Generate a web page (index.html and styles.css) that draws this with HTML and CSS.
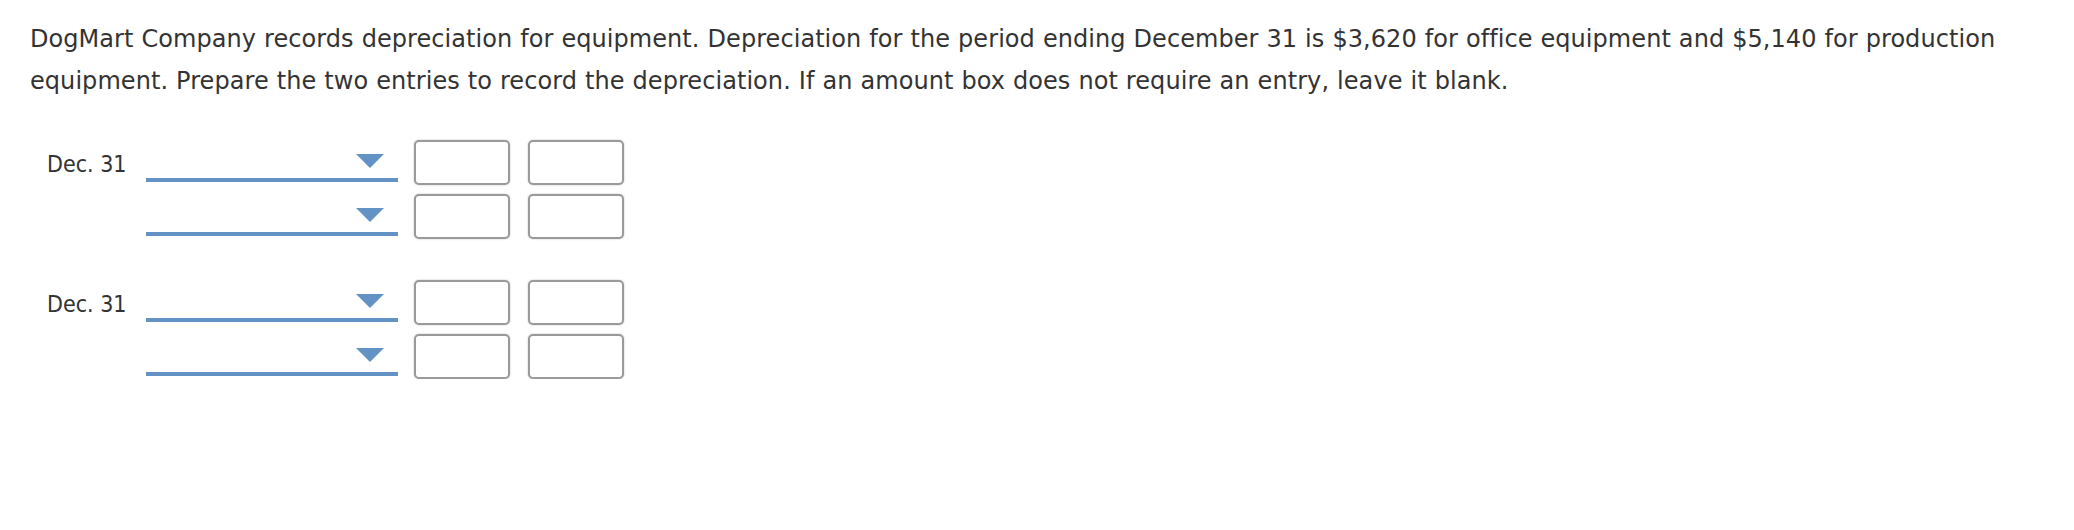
FILE: index.html
```html
<!DOCTYPE html>
<html lang="en">
<head>
<meta charset="utf-8">
<title>Depreciation entries</title>
<link rel="stylesheet" href="styles.css">
</head>
<body>
<div class="page">
  <p class="prompt">DogMart Company records depreciation for equipment. Depreciation for the period ending December 31 is $3,620 for office equipment and $5,140 for production equipment. Prepare the two entries to record the depreciation. If an amount box does not require an entry, leave it blank.</p>
  <div class="journal">
    <div class="entry">
      <div class="row">
        <span class="date">Dec. 31</span>
        <div class="select"><span class="caret"></span></div>
        <div class="amt"></div>
        <div class="amt"></div>
      </div>
      <div class="row">
        <span class="date"></span>
        <div class="select"><span class="caret"></span></div>
        <div class="amt"></div>
        <div class="amt"></div>
      </div>
    </div>
    <div class="entry">
      <div class="row">
        <span class="date">Dec. 31</span>
        <div class="select"><span class="caret"></span></div>
        <div class="amt"></div>
        <div class="amt"></div>
      </div>
      <div class="row">
        <span class="date"></span>
        <div class="select"><span class="caret"></span></div>
        <div class="amt"></div>
        <div class="amt"></div>
      </div>
    </div>
  </div>
</div>
</body>
</html>
```
FILE: styles.css
```css
html, body {
  margin: 0;
  padding: 0;
  background: #ffffff;
}

.page {
  padding: 18px 30px 0 30px;
  color: #333333;
}

.prompt {
  margin: 0;
  font-family: "DejaVu Sans", Verdana, sans-serif;
  font-size: 24px;
  letter-spacing: 0.06px;
  word-spacing: 0.3px;
  line-height: 42px;
}

.journal {
  margin-top: 38px;
  padding-left: 17px;
  display: flex;
  flex-direction: column;
  gap: 41px;
}

.entry {
  display: flex;
  flex-direction: column;
  gap: 9px;
}

.row {
  display: flex;
  align-items: flex-start;
  height: 45px;
}

.date {
  width: 99px;
  flex: none;
  font-family: "DejaVu Sans Condensed", Tahoma, sans-serif;
  font-size: 23px;
  line-height: 22px;
  padding-top: 13px;
  color: #333333;
}

.select {
  width: 252px;
  height: 42px;
  flex: none;
  border-bottom: 4px solid #6293c4;
  display: flex;
  justify-content: flex-end;
  align-items: flex-end;
  padding-right: 14px;
  padding-bottom: 10px;
  box-sizing: border-box;
  margin-right: 16px;
}

.caret {
  width: 0;
  height: 0;
  border-left: 14px solid transparent;
  border-right: 14px solid transparent;
  border-top: 14px solid #6293c4;
}

.amt {
  width: 96px;
  height: 45px;
  flex: none;
  box-sizing: border-box;
  border: 2px solid #9a9a9a;
  border-radius: 5px;
  box-shadow: 0 0 2px rgba(0, 0, 0, 0.25);
  background: #ffffff;
  margin-right: 18px;
}
```
